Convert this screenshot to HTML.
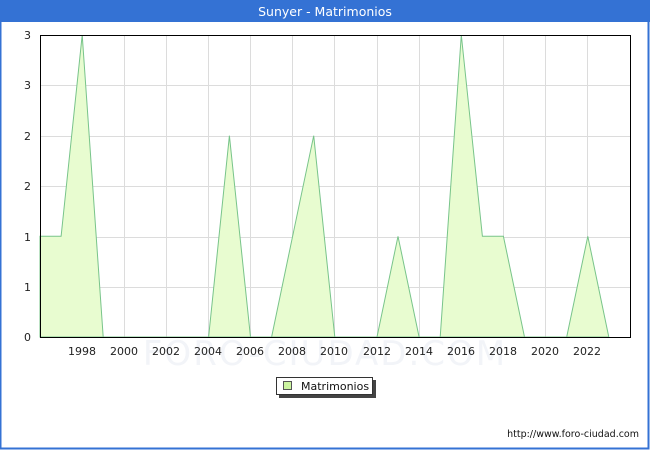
<!DOCTYPE html>
<html><head><style>
body{margin:0;width:650px;height:450px;overflow:hidden;background:#fff;font-family:"DejaVu Sans","Liberation Sans",sans-serif}
</style></head><body>
<svg width="650" height="450" xmlns="http://www.w3.org/2000/svg" font-family="DejaVu Sans, Liberation Sans, sans-serif">
<rect x="0" y="0" width="650" height="450" fill="#fff"/>
<rect x="0.5" y="0.5" width="648" height="448" fill="none" stroke="#3472d4" stroke-width="2"/>
<rect x="0" y="0" width="650" height="22" fill="#3472d4"/>
<text x="325" y="16" text-anchor="middle" font-size="12.5" fill="#fff">Sunyer - Matrimonios</text>
<g stroke="#dcdcdc" stroke-width="1">
<line x1="40" y1="85.5" x2="630" y2="85.5"/><line x1="40" y1="136.5" x2="630" y2="136.5"/><line x1="40" y1="186.5" x2="630" y2="186.5"/><line x1="40" y1="237.5" x2="630" y2="237.5"/><line x1="40" y1="287.5" x2="630" y2="287.5"/>
<line x1="82.5" y1="35" x2="82.5" y2="337"/><line x1="124.5" y1="35" x2="124.5" y2="337"/><line x1="166.5" y1="35" x2="166.5" y2="337"/><line x1="208.5" y1="35" x2="208.5" y2="337"/><line x1="250.5" y1="35" x2="250.5" y2="337"/><line x1="292.5" y1="35" x2="292.5" y2="337"/><line x1="334.5" y1="35" x2="334.5" y2="337"/><line x1="377.5" y1="35" x2="377.5" y2="337"/><line x1="419.5" y1="35" x2="419.5" y2="337"/><line x1="461.5" y1="35" x2="461.5" y2="337"/><line x1="503.5" y1="35" x2="503.5" y2="337"/><line x1="545.5" y1="35" x2="545.5" y2="337"/><line x1="587.5" y1="35" x2="587.5" y2="337"/>
</g>
<text x="325" y="365" text-anchor="middle" font-size="34" fill="#f2f4f8" letter-spacing="2">FORO-CIUDAD.COM</text>
<polygon fill="#e8fcd0" stroke="#78c48a" stroke-width="1" points="40,337 40,236.3 61.1,236.3 82.2,35 103.2,337 208.6,337 229.4,135.7 250.5,337 271.6,337 292.6,236.3 313.7,135.7 334.8,337 377,337 398,236.3 419.1,337 440.2,337 461.3,35 482.4,236.3 503.4,236.3 524.5,337 566.7,337 587.8,236.3 608.8,337"/>
<rect x="40.5" y="35.5" width="590" height="302" fill="none" stroke="#000" stroke-width="1"/>
<g font-size="11" fill="#222" text-anchor="end">
<text x="31" y="39">3</text><text x="31" y="89">3</text><text x="31" y="140">2</text><text x="31" y="190">2</text><text x="31" y="241">1</text><text x="31" y="291">1</text><text x="31" y="341">0</text>
</g>
<g font-size="11" fill="#222" text-anchor="middle">
<text x="82" y="355">1998</text><text x="124" y="355">2000</text><text x="166" y="355">2002</text><text x="208" y="355">2004</text><text x="250" y="355">2006</text><text x="292" y="355">2008</text><text x="334" y="355">2010</text><text x="377" y="355">2012</text><text x="419" y="355">2014</text><text x="461" y="355">2016</text><text x="503" y="355">2018</text><text x="545" y="355">2020</text><text x="587" y="355">2022</text>
</g>
<rect x="279" y="380" width="97" height="18" fill="#444"/>
<rect x="276.5" y="377.5" width="96" height="17" fill="#fff" stroke="#333"/>
<rect x="283.5" y="381.5" width="8" height="8" fill="#ccf5a0" stroke="#555"/>
<text x="301" y="390" font-size="11" fill="#111">Matrimonios</text>
<text x="639" y="437" text-anchor="end" font-size="9.5" fill="#111">http://www.foro-ciudad.com</text>
</svg>
</body></html>
